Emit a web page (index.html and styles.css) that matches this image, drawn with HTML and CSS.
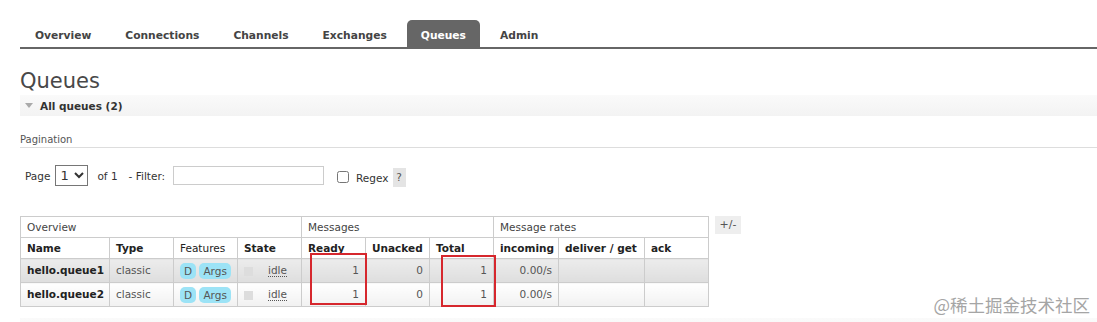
FILE: index.html
```html
<!DOCTYPE html>
<html>
<head>
    <title>RabbitMQ Management - Queues</title>
    <meta charset="utf-8">
    <link rel="stylesheet" href="styles.css">
</head>
<body>
    <div class="page">
        <!-- Top navigation -->
        <ul class="tabs">
            <li>Overview</li>
            <li>Connections</li>
            <li>Channels</li>
            <li>Exchanges</li>
            <li class="active">Queues</li>
            <li>Admin</li>
        </ul>

        <h1>Queues</h1>

        <div class="section-bar">
            <span class="arrow"></span>
            <span>All queues (2)</span>
        </div>

        <!-- Pagination -->
        <h3 class="sub">Pagination</h3>
        <div class="filter-row">
            <label>Page</label>
            <select class="page-select"><option>1</option></select>
            <span class="of">of 1</span>
            <label class="filter-label">- Filter:</label>
            <input type="text" class="filter-input">
            <input type="checkbox" class="regex-box">
            <label class="regex-label">Regex</label>
            <span class="help">?</span>
        </div>

        <!-- Queue list -->
        <div class="list-wrap">
            <table class="list">
                <colgroup>
                    <col style="width: 89px">
                    <col style="width: 64px">
                    <col style="width: 64px">
                    <col style="width: 64px">
                    <col style="width: 64px">
                    <col style="width: 64px">
                    <col style="width: 64px">
                    <col style="width: 65px">
                    <col style="width: 86px">
                    <col style="width: 64px">
                </colgroup>
                <tr class="group">
                    <th colspan="4">Overview</th>
                    <th colspan="3">Messages</th>
                    <th colspan="3">Message rates</th>
                </tr>
                <tr class="head">
                    <th>Name</th>
                    <th>Type</th>
                    <th class="plain">Features</th>
                    <th>State</th>
                    <th>Ready</th>
                    <th>Unacked</th>
                    <th>Total</th>
                    <th>incoming</th>
                    <th>deliver / get</th>
                    <th>ack</th>
                </tr>
                <tr class="alt1">
                    <td class="name">hello.queue1</td>
                    <td>classic</td>
                    <td><span class="pill">D</span> <span class="pill">Args</span></td>
                    <td><span class="state-box"></span><span class="idle">idle</span></td>
                    <td class="num">1</td>
                    <td class="num">0</td>
                    <td class="num">1</td>
                    <td class="num">0.00/s</td>
                    <td></td>
                    <td></td>
                </tr>
                <tr class="alt2">
                    <td class="name">hello.queue2</td>
                    <td>classic</td>
                    <td><span class="pill">D</span> <span class="pill">Args</span></td>
                    <td><span class="state-box"></span><span class="idle">idle</span></td>
                    <td class="num">1</td>
                    <td class="num">0</td>
                    <td class="num">1</td>
                    <td class="num">0.00/s</td>
                    <td></td>
                    <td></td>
                </tr>
            </table>
            <span class="toggle">+/-</span>

            <!-- highlight marks drawn over the table -->
            <div class="mark mark-ready"></div>
            <div class="mark mark-total"></div>
        </div>

        <div class="section-bar bottom"></div>
    </div>

    <div class="watermark">@稀土掘金技术社区</div>
</body>
</html>
```

FILE: styles.css
```css
body {
    margin: 0;
    font-family: "DejaVu Sans", Verdana, sans-serif;
    color: #444;
    background-color: #fff;
    overflow: hidden;
}

.page {
    padding: 20px 0 0 20px;
}

/* Tabs */
.tabs {
    list-style: none;
    margin: 0;
    padding: 0 0 0 1px;
    display: flex;
    gap: 6px;
    border-bottom: 2px solid #666;
}

.tabs li {
    box-sizing: border-box;
    height: 27px;
    padding: 4px 14px 0;
    line-height: 23px;
    font-size: 10.7px;
    font-weight: bold;
    color: #444;
    border-radius: 5px 5px 0 0;
}

.tabs li.active {
    background-color: #666;
    color: #fff;
}

h1 {
    margin: 20px 0 1px;
    font-size: 21px;
    line-height: 25px;
    font-weight: normal;
    color: #484848;
}

/* Collapsible section header */
.section-bar {
    height: 21px;
    display: flex;
    align-items: center;
    padding-left: 5px;
    background: linear-gradient(#fafafa, #f3f3f3);
    font-size: 10.5px;
    font-weight: bold;
    color: #333;
}

.arrow {
    width: 0;
    height: 0;
    border-left: 4px solid transparent;
    border-right: 4px solid transparent;
    border-top: 5px solid #aaa;
    margin-right: 7px;
}

.section-bar.bottom {
    margin-top: 11px;
    height: 30px;
}

.sub {
    margin: 18px 0 0;
    padding-bottom: 1px;
    font-size: 10px;
    line-height: 12px;
    font-weight: normal;
    color: #555;
    border-bottom: 1px solid #ddd;
}

/* Pagination row */
.filter-row {
    margin-top: 17px;
    height: 21px;
    display: flex;
    align-items: center;
    padding-left: 5px;
    font-size: 10.5px;
    color: #333;
}

.page-select {
    box-sizing: border-box;
    width: 33px;
    height: 21px;
    margin: 0 9px 0 5px;
    padding: 0;
    font-family: "DejaVu Sans", sans-serif;
    font-size: 13px;
    color: #333;
    border: 1px solid #767676;
    border-radius: 0;
    background-color: #fff;
}

.of {
    margin-right: 11px;
}

.filter-label {
    margin-right: 8px;
}

.filter-input {
    box-sizing: border-box;
    width: 151px;
    height: 19px;
    margin: 0 13px 0 0;
    padding: 0 3px;
    border: 1px solid #ccc;
}

.regex-box {
    width: 12px;
    height: 12px;
    margin: 2px 7px 0 0;
}

.regex-label {
    padding-top: 4px;
    margin-right: 4px;
}

.help {
    align-self: flex-start;
    margin-top: 3px;
    width: 13px;
    height: 19px;
    line-height: 19px;
    text-align: center;
    background-color: #e4e4e4;
    color: #555;
}

/* Queue table */
.list-wrap {
    position: relative;
    display: flex;
    align-items: flex-start;
    gap: 6px;
    margin-top: 30px;
}

table.list {
    border-collapse: collapse;
    table-layout: fixed;
    width: 688px;
    font-size: 10.5px;
}

.list th,
.list td {
    border: 1px solid #ccc;
    padding: 0 6px;
    text-align: left;
    white-space: nowrap;
    overflow: hidden;
}

.list tr.group th {
    font-weight: normal;
    line-height: 20px;
    color: #444;
}

.list tr.head th {
    line-height: 20px;
    color: #222;
}

.list tr.head th.plain {
    font-weight: normal;
}

.list td {
    line-height: 23px;
    color: #555;
}

.list td.name {
    font-weight: bold;
    color: #222;
}

.list td.num {
    text-align: right;
}

.list tr.alt1 td {
    background: linear-gradient(#ececec, #dedede);
}

.list tr.alt2 td {
    background: linear-gradient(#ffffff, #f1f1f1);
}

.pill {
    display: inline-block;
    padding: 0 4px;
    line-height: 16px;
    border-radius: 5px;
    background-color: #9ce3f6;
    color: #555;
    vertical-align: middle;
}

.state-box {
    display: inline-block;
    width: 9px;
    height: 9px;
    margin-right: 15px;
    background-color: #ddd;
    vertical-align: middle;
}

.idle {
    border-bottom: 1px dotted #555;
    line-height: 12px;
    display: inline-block;
}

.toggle {
    width: 26px;
    height: 18px;
    line-height: 18px;
    text-align: center;
    font-size: 11px;
    color: #555;
    background-color: #eee;
}

.mark {
    position: absolute;
    box-sizing: border-box;
    border: 2px solid #d6272d;
}

.mark-ready {
    left: 290px;
    top: 37px;
    width: 57px;
    height: 52px;
}

.mark-total {
    left: 421px;
    top: 39px;
    width: 55px;
    height: 52px;
}

.watermark {
    position: absolute;
    right: 7px;
    top: 295px;
    font-family: "Noto Sans CJK SC", sans-serif;
    font-size: 17.5px;
    line-height: 20px;
    color: #a5a5a5;
}
```
